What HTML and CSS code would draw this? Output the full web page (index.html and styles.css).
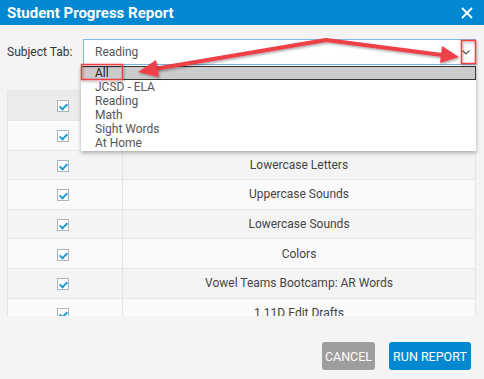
FILE: index.html
```html
<!DOCTYPE html>
<html lang="en">
<head>
  <meta charset="UTF-8" />
  <title>Student Progress Report</title>
  <meta name="viewport" content="width=device-width, initial-scale=1.0" />
  <link rel="stylesheet" href="styles.css">
</head>
<body>
<div class="dialog">
  <div class="dialog-header">
    <span class="dialog-title">Student Progress Report</span>
    <svg class="close" width="12" height="12" viewBox="0 0 12 12">
      <path d="M1 1 L11 11 M11 1 L1 11" stroke="#fff" stroke-width="1.8" fill="none"/>
    </svg>
  </div>

  <div class="dialog-body">
    <div class="field">
      <label class="field-label">Subject Tab:</label>
      <div class="select">
        <span class="select-value">Reading</span>
        <svg class="chevron" width="8" height="5" viewBox="0 0 8 5">
          <path d="M0.5 0.5 L4 4 L7.5 0.5" stroke="#555" stroke-width="1.1" fill="none"/>
        </svg>
      </div>
    </div>

    <!-- open dropdown -->
    <ul class="dropdown">
      <li class="active">All</li>
      <li>JCSD - ELA</li>
      <li>Reading</li>
      <li>Math</li>
      <li>Sight Words</li>
      <li>At Home</li>
    </ul>

    <div class="table-wrap">
      <table class="skills">
        <colgroup><col class="col-chk"><col></colgroup>
        <tr class="head"><td class="chk"><span class="box"></span></td><td>Skill</td></tr>
        <tr><td class="chk"><span class="box"></span></td><td>Uppercase Letters</td></tr>
        <tr><td class="chk"><span class="box"></span></td><td>Lowercase Letters</td></tr>
        <tr><td class="chk"><span class="box"></span></td><td>Uppercase Sounds</td></tr>
        <tr><td class="chk"><span class="box"></span></td><td>Lowercase Sounds</td></tr>
        <tr><td class="chk"><span class="box"></span></td><td>Colors</td></tr>
        <tr><td class="chk"><span class="box"></span></td><td>Vowel Teams Bootcamp: AR Words</td></tr>
        <tr><td class="chk"><span class="box"></span></td><td>1.11D Edit Drafts</td></tr>
      </table>
    </div>
  </div>

  <div class="dialog-footer">
    <button class="btn btn-cancel">CANCEL</button>
    <button class="btn btn-run">RUN REPORT</button>
  </div>
</div>

<!-- screenshot annotations -->
<svg class="annotations" width="484" height="379" viewBox="0 0 484 379">
  <defs>
    <filter id="shadow" x="-10%" y="-50%" width="120%" height="200%">
      <feDropShadow dx="1" dy="1.5" stdDeviation="1" flood-color="#000" flood-opacity="0.35"/>
    </filter>
  </defs>
  <g filter="url(#shadow)" stroke="#ee3f46" fill="none">
    <rect x="461.5" y="40.5" width="14" height="23" stroke-width="1.5"/>
    <rect x="81.5" y="64.5" width="41" height="15" stroke-width="1.5"/>
    <polyline points="157,68.5 326,40 442,55" stroke-width="4" stroke-linejoin="round"/>
  </g>
  <g filter="url(#shadow)" fill="#ee3f46">
    <polygon points="138,72 159,77 156,60"/>
    <polygon points="459,57 440,63 442,46"/>
  </g>
</svg>
</body>
</html>
```

FILE: styles.css
```css
* {
  box-sizing: border-box;
}

body {
  margin: 0;
  background: #f4f4f4;
  font-family: Roboto, "Liberation Sans", sans-serif;
  color: #444;
}

.dialog {
  width: 484px;
  height: 379px;
  display: flex;
  flex-direction: column;
  position: relative;
}

.dialog-header {
  height: 25px;
  background: #0288d1;
  display: flex;
  align-items: center;
  justify-content: space-between;
  padding: 0 11px 0 7px;
}

.dialog-title {
  color: #fff;
  font-weight: bold;
  font-size: 15px;
}

.dialog-body {
  padding: 14px 8px 0 7px;
}

.field {
  display: flex;
  align-items: center;
  height: 26px;
}

.field-label {
  width: 76px;
  font-size: 12px;
  color: #333;
}

.select {
  flex: 1;
  height: 26px;
  background: #fff;
  border: 1px solid #7cb9e8;
  display: flex;
  align-items: center;
  justify-content: space-between;
  padding: 0 5px 0 11px;
}

.select-value {
  font-size: 12px;
  color: #555;
}

/* Dropdown list */
.dropdown {
  position: absolute;
  top: 65px;
  left: 81px;
  width: 395px;
  margin: 0;
  padding: 0 0 1px;
  list-style: none;
  background: #fff;
  box-shadow: 0 2px 4px rgba(0,0,0,0.3);
  z-index: 5;
}

.dropdown li {
  font-size: 12px;
  line-height: 14px;
  color: #555;
  padding-left: 14px;
}

.dropdown li.active {
  background: #cbcbcb;
  border: 1px solid #333;
  color: #222;
  padding-left: 13px;
  line-height: 12px;
  margin: 1px 0 0;
}

/* Skills table */
.table-wrap {
  margin-top: 25px;
  height: 226px;
  overflow: hidden;
}

.skills {
  width: 469px;
  table-layout: fixed;
  border-collapse: collapse;
  border-left: 1px solid #e6e6e6;
  border-right: 1px solid #e6e6e6;
}

.col-chk {
  width: 115px;
}

.skills td {
  height: 29.6px;
  padding: 0;
  font-size: 12px;
  color: #444;
  text-align: center;
  border-top: 1px solid #e6e6e6;
}

.skills td.chk {
  padding-right: 5px;
  border-right: 1px solid #e3e3e3;
}

.skills tr {
  background: #fafafa;
}

.skills tr:nth-child(odd) {
  background: #f4f4f4;
}

.skills tr.head {
  background: #ebebeb;
}

.skills tr.head td {
  height: 30px;
}

.box {
  display: inline-block;
  width: 12px;
  height: 12px;
  border: 1px solid #a9b4bd;
  background: #fff;
  vertical-align: middle;
  position: relative;
}

.box::after {
  content: "";
  position: absolute;
  left: 3px;
  top: 1px;
  width: 3px;
  height: 6px;
  border: solid #1c9ad6;
  border-width: 0 2px 2px 0;
  transform: rotate(45deg);
}

.dialog-footer {
  flex: 1;
  display: flex;
  justify-content: flex-end;
  align-items: flex-start;
  gap: 14px;
  padding: 26px 13px 0 0;
}

.btn {
  height: 28px;
  border: none;
  border-radius: 3px;
  color: #fff;
  font-family: Roboto, "Liberation Sans", sans-serif;
  font-size: 12.5px;
  font-weight: 400;
  padding: 0;
}

.btn-cancel {
  width: 53px;
  background: #9e9e9e;
}

.btn-run {
  width: 82px;
  background: #0288d1;
}

.annotations {
  position: absolute;
  top: 0;
  left: 0;
  pointer-events: none;
  z-index: 10;
}
```
